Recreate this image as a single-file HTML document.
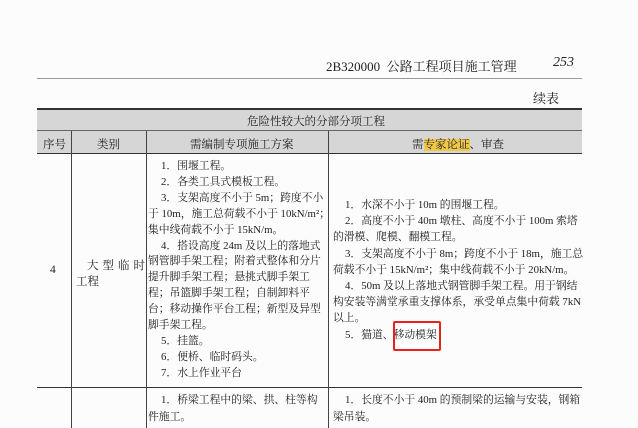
<!DOCTYPE html>
<html><head><meta charset="utf-8"><style>
html,body{margin:0;width:638px;height:428px;overflow:hidden;}
body{background:#fcfcfc;position:relative;font-family:"Liberation Serif","Noto Serif CJK SC",serif;color:#222;}
.a{position:absolute;white-space:nowrap;}
.hl{position:absolute;background:#333;}
.vl{position:absolute;background:#444;width:1px;}
.t{font-size:11.5px;}
.m{font-size:10.8px;}
.m div,.r div{white-space:nowrap;}
.r{font-size:10.8px;}
</style></head><body>
<div class="a" style="left:326px;top:56px;font-size:13px">2B320000&nbsp;&nbsp;公路工程项目施工管理</div>
<div class="a" style="left:553px;top:55px;font-size:14px;font-style:italic">253</div>
<div class="hl" style="left:37px;top:78px;width:545px;height:1px;background:#999"></div>
<div class="a" style="left:533px;top:88px;font-size:13px">续表</div>
<div style="position:absolute;left:37px;top:108px;width:545px;height:45px;background:#d6d6d6"></div>
<div class="hl" style="left:37px;top:108px;width:545px;height:2px"></div>
<div class="hl" style="left:37px;top:130px;width:545px;height:1px;background:#666"></div>
<div class="hl" style="left:37px;top:153px;width:545px;height:1px"></div>
<div class="hl" style="left:37px;top:387px;width:545px;height:1px"></div>
<div class="vl" style="left:71px;top:131px;height:297px"></div>
<div class="vl" style="left:146px;top:131px;height:297px"></div>
<div class="vl" style="left:328px;top:131px;height:297px"></div>
<div class="a t" style="left:247px;top:113px">危险性较大的分部分项工程</div>
<div class="a t" style="left:43px;top:136px">序号</div>
<div class="a t" style="left:97px;top:136px">类别</div>
<div class="a t" style="left:190px;top:136px">需编制专项施工方案</div>
<div class="a t" style="left:412px;top:136px">需<span style="background:#f0c84a">专家论证</span>、审查</div>
<div class="a t" style="left:50px;top:264px">4</div>
<div class="a t" style="left:87px;top:257px;letter-spacing:4px">大型临时</div>
<div class="a t" style="left:76px;top:273px">工程</div>
<div class="a m" style="left:148px;top:159px;line-height:15.9px">
<div style="padding-left:13px">1．围堰工程。</div>
<div style="padding-left:13px">2．各类工具式模板工程。</div>
<div style="padding-left:13px">3．支架高度不小于 5m；跨度不小</div>
<div>于 10m，施工总荷载不小于 10kN/m²；</div>
<div>集中线荷载不小于 15kN/m。</div>
<div style="padding-left:13px">4．搭设高度 24m 及以上的落地式</div>
<div>钢管脚手架工程；附着式整体和分片</div>
<div>提升脚手架工程；悬挑式脚手架工</div>
<div>程；吊篮脚手架工程；自制卸料平</div>
<div>台；移动操作平台工程；新型及异型</div>
<div>脚手架工程。</div>
<div style="padding-left:13px">5．挂篮。</div>
<div style="padding-left:13px">6．便桥、临时码头。</div>
<div style="padding-left:13px">7．水上作业平台</div>
</div>
<div class="a r" style="left:333px;top:197px;line-height:16.2px">
<div style="padding-left:12px">1．水深不小于 10m 的围堰工程。</div>
<div style="padding-left:12px">2．高度不小于 40m 墩柱、高度不小于 100m 索塔</div>
<div>的滑模、爬模、翻模工程。</div>
<div style="padding-left:12px">3．支架高度不小于 8m；跨度不小于 18m，施工总</div>
<div>荷载不小于 15kN/m²；集中线荷载不小于 20kN/m。</div>
<div style="padding-left:12px">4．50m 及以上落地式钢管脚手架工程。用于钢结</div>
<div>构安装等满堂承重支撑体系，承受单点集中荷载 7kN</div>
<div>以上。</div>
<div style="padding-left:12px">5．猫道、移动模架</div>
</div>
<div style="position:absolute;left:393px;top:321px;width:44px;height:26px;border:2px solid #e8201c;border-radius:2px"></div>
<div class="a m" style="left:148px;top:392px;line-height:17px">
<div style="padding-left:13px">1．桥梁工程中的梁、拱、柱等构</div>
<div>件施工。</div>
</div>
<div class="a r" style="left:333px;top:392px;line-height:17px">
<div style="padding-left:12px">1．长度不小于 40m 的预制梁的运输与安装，钢箱</div>
<div>梁吊装。</div>
</div>
</body></html>
